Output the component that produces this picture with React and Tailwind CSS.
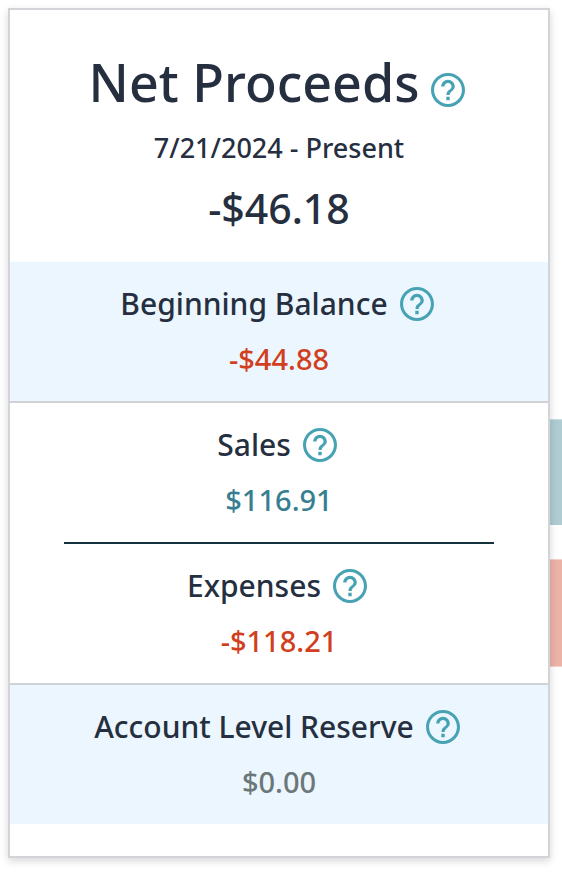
function HelpButton({ label }) {
  return (
    <button type="button" aria-label={`About ${label}`} className="shrink-0 text-[#47a2b3]">
      <svg viewBox="2 2 20 20" className="size-[34px]" fill="currentColor" aria-hidden="true">
        <path d="M11 18h2v-2h-2v2zm1-16C6.48 2 2 6.48 2 12s4.48 10 10 10 10-4.48 10-10S17.52 2 12 2zm0 18.2c-4.52 0-8.2-3.68-8.2-8.2S7.48 3.8 12 3.8s8.2 3.68 8.2 8.2-3.68 8.2-8.2 8.2zM12 6c-2.21 0-4 1.79-4 4h1.9c0-1.16.94-2.1 2.1-2.1s2.1.94 2.1 2.1c0 2-3 1.75-3 5h1.9c0-2.25 3-2.5 3-5 0-2.21-1.79-4-4-4z" />
      </svg>
    </button>
  );
}

function Section({ title, amount, amountClass, className = "" }) {
  return (
    <section className={`flex flex-col items-center gap-2 pt-5 pb-4 ${className}`}>
      <div className="flex items-center justify-center gap-3 pr-1">
        <h2 className="text-[30px] leading-[43px]">{title}</h2>
        <HelpButton label={title} />
      </div>
      <p className={`text-[29px] leading-[52px] ${amountClass}`}>{amount}</p>
    </section>
  );
}

function App() {
  return (
    <div className="flex bg-white pt-2 pb-[14px] pl-2 font-['Noto_Sans',sans-serif] font-medium text-[#252f3f]">
      <main className="z-10 min-w-0 flex-1 border-2 border-[#d2d4d8] bg-white pb-8 shadow-[0_3px_8px_rgba(0,0,0,0.16)]">
        <header className="flex flex-col items-center pt-9 pb-6">
          <div className="flex items-center justify-center gap-3 pr-1">
            <h1 className="text-[52px] leading-[72px]">Net Proceeds</h1>
            <div className="flex pt-4">
              <HelpButton label="Net Proceeds" />
            </div>
          </div>
          <p className="pt-3 text-[27px] leading-[36px]">7/21/2024 - Present</p>
          <p className="pt-3 text-[41px] leading-[60px]">-$46.18</p>
        </header>

        <Section
          title="Beginning Balance"
          amount="-$44.88"
          amountClass="text-[#d13f20]"
          className="border-b-2 border-[#d0d2d5] bg-[#ebf6fe]"
        />
        <Section title="Sales" amount="$116.91" amountClass="text-[#377f90]" />
        <hr className="mx-[10%] border-t-2 border-[#14323e]" />
        <Section
          title="Expenses"
          amount="-$118.21"
          amountClass="text-[#d13f20]"
          className="border-b-2 border-[#d0d2d5]"
        />
        <Section
          title="Account Level Reserve"
          amount="$0.00"
          amountClass="text-[#6b7778]"
          className="bg-[#ebf6fe]"
        />
      </main>

      {/* edge of the sales and expenses chart */}
      <div className="flex w-3 shrink-0 flex-col gap-[34px] pt-[411px]" aria-hidden="true">
        <div className="h-[106px] border-t border-[#c9dde1] bg-[#afccd3]" />
        <div className="h-[108px] border-y border-[#f3d3cc] bg-[#ebb2a6]" />
      </div>
    </div>
  );
}

export default App;
